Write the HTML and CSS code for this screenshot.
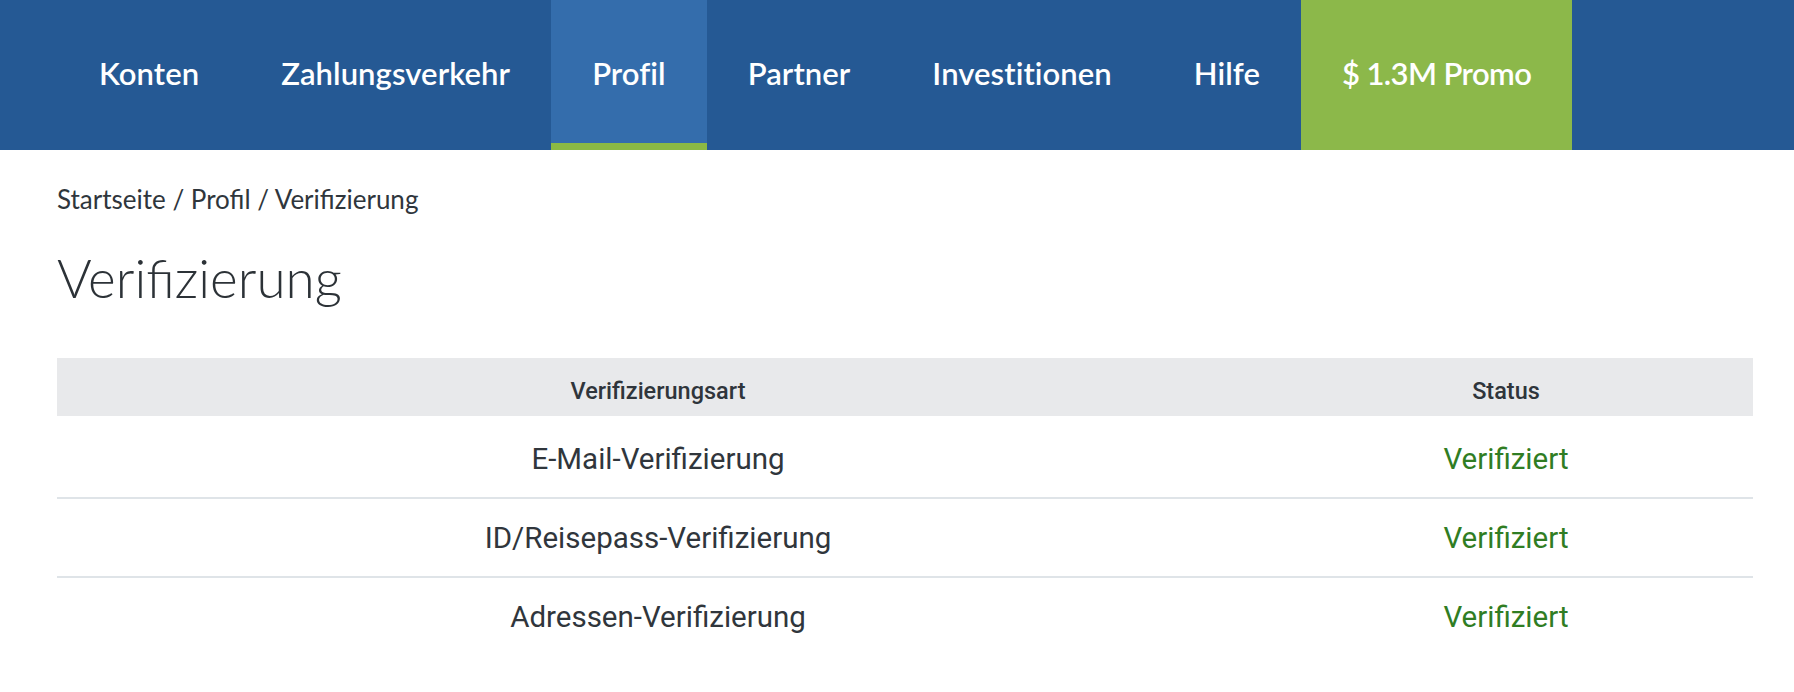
FILE: index.html
```html
<!DOCTYPE html>
<html lang="de">
<head>
<meta charset="utf-8">
<title>Verifizierung</title>
<link rel="stylesheet" href="styles.css">
</head>
<body>
<nav class="topnav">
  <a class="navlink" href="#">Konten</a>
  <a class="navlink" href="#">Zahlungsverkehr</a>
  <a class="navlink active" href="#">Profil</a>
  <a class="navlink" href="#">Partner</a>
  <a class="navlink" href="#">Investitionen</a>
  <a class="navlink" href="#">Hilfe</a>
  <a class="navlink promo" href="#">$ 1.3M Promo</a>
</nav>
<main class="page">
  <div class="breadcrumb">Startseite / Profil / Verifizierung</div>
  <h1 class="title">Verifizierung</h1>
  <table class="vtable">
    <colgroup><col class="col-type"><col class="col-status"></colgroup>
    <thead>
      <tr><th>Verifizierungsart</th><th>Status</th></tr>
    </thead>
    <tbody>
      <tr><td>E-Mail-Verifizierung</td><td class="ok">Verifiziert</td></tr>
      <tr><td>ID/Reisepass-Verifizierung</td><td class="ok">Verifiziert</td></tr>
      <tr><td>Adressen-Verifizierung</td><td class="ok">Verifiziert</td></tr>
    </tbody>
  </table>
</main>
</body>
</html>
```

FILE: styles.css
```css
html, body {
  margin: 0;
  padding: 0;
  background: #ffffff;
}

body {
  font-family: Lato, "Open Sans", sans-serif;
  color: #2f363c;
}

.topnav {
  display: flex;
  height: 150px;
  padding-left: 58px;
  background: #255994;
}

.navlink {
  display: flex;
  align-items: center;
  padding: 0 41px 4px;
  color: #ffffff;
  text-decoration: none;
  font-family: Lato, "Open Sans", sans-serif;
  font-weight: 600;
  font-size: 31px;
  letter-spacing: 0.08px;
}

.navlink.active {
  background: #346dac;
  box-shadow: inset 0 -7px 0 #8bb944;
}

.navlink.promo {
  background: #8cb84a;
  letter-spacing: -0.6px;
}

.page {
  padding: 0 41px 0 57px;
}

.breadcrumb {
  margin-top: 33px;
  font-size: 26px;
  line-height: 32px;
  color: #2f363c;
}

.title {
  margin: 31px 0 0;
  font-weight: 300;
  font-size: 53px;
  line-height: 64px;
  color: #2c3237;
}

.vtable {
  margin-top: 48px;
  width: 1696px;
  border-collapse: collapse;
  font-family: Roboto, "Liberation Sans", sans-serif;
}

.col-type { width: 1202px; }
.col-status { width: 494px; }

.vtable th {
  height: 58px;
  padding: 8px 0 0;
  box-sizing: border-box;
  background: #e8e9eb;
  font-weight: 500;
  font-size: 23.5px;
  color: #2f353b;
  text-align: center;
}

.vtable td {
  height: 77px;
  padding: 0;
  text-align: center;
  font-size: 29.5px;
  color: #30363c;
  border-bottom: 2px solid #dfe4e8;
}

.vtable tbody tr:first-child td {
  padding-top: 4px;
}

.vtable tbody tr:last-child td {
  border-bottom: none;
}

.vtable td.ok {
  color: #307d23;
}
```
